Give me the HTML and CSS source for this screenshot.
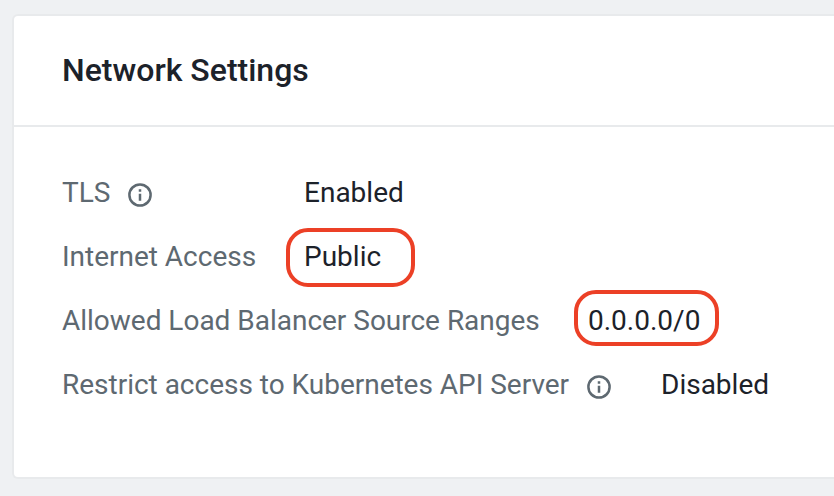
FILE: index.html
```html
<!DOCTYPE html>
<html lang="en">
<head>
<meta charset="utf-8">
<title>Network Settings</title>
<link rel="stylesheet" href="styles.css">
</head>
<body>
<section class="card">
  <header class="card-header"><h2 class="title">Network Settings</h2></header>
  <div class="card-body">
    <div class="row">
      <span class="label tls">TLS</span>
      <svg class="info" viewBox="0 0 24 24"><circle cx="12" cy="12" r="10.6"/><path d="M12 10.7v7M12 6.2v2.6"/></svg>
      <span class="value enabled">Enabled</span>
    </div>
    <div class="row">
      <span class="label access">Internet Access</span>
      <span class="value marked public">Public</span>
    </div>
    <div class="row">
      <span class="label ranges">Allowed Load Balancer Source Ranges</span>
      <span class="value marked cidr">0.0.0.0/0</span>
    </div>
    <div class="row">
      <span class="label restrict">Restrict access to Kubernetes API Server</span>
      <svg class="info" viewBox="0 0 24 24"><circle cx="12" cy="12" r="10.6"/><path d="M12 10.7v7M12 6.2v2.6"/></svg>
      <span class="value disabled">Disabled</span>
    </div>
  </div>
</section>
</body>
</html>
```
FILE: styles.css
```css
* { box-sizing: border-box; }
body {
  margin: 0;
  height: 496px;
  padding: 14px 0 17px 12px;
  overflow: hidden;
  background: #eff1f3;
  font-family: Roboto, sans-serif;
  font-size: 28px;
  color: #1c222a;
}
.card {
  height: 465px;
  background: #fff;
  border: 2px solid #e8eaec;
  border-right: 0;
  border-radius: 6px 0 0 6px;
}
.card-header {
  height: 111px;
  padding: 0 0 2px 48px;
  border-bottom: 2px solid #e8eaec;
  display: flex;
  align-items: center;
}
.title {
  margin: 0;
  font-size: 32px;
  font-weight: 500;
  line-height: 40px;
  white-space: nowrap;
}
.card-body { padding: 33px 0 0 48px; }
.row { height: 64px; display: flex; align-items: center; white-space: nowrap; }
.label { color: #5e6971; flex: none; letter-spacing: -0.015px; }
.value { flex: none; }
.tls { width: 66px; }
.access { width: 224px; }
.ranges { width: 512px; }
.restrict { width: 525px; }
.info {
  width: 24px;
  height: 24px;
  margin-top: 5px;
  flex: none;
  fill: none;
  stroke: #5e6971;
  stroke-width: 2.5;
}
.enabled { margin-left: 152px; }
.disabled { margin-left: 50px; }
.marked {
  display: flex;
  align-items: center;
  border: 4px solid #ec4026;
  border-radius: 22px;
}
.public { width: 129px; height: 59px; margin-top: 3px; padding: 0 0 3px 14px; }
.cidr { width: 145px; height: 56px; margin-bottom: 4px; padding: 4px 0 0 10px; }
```
